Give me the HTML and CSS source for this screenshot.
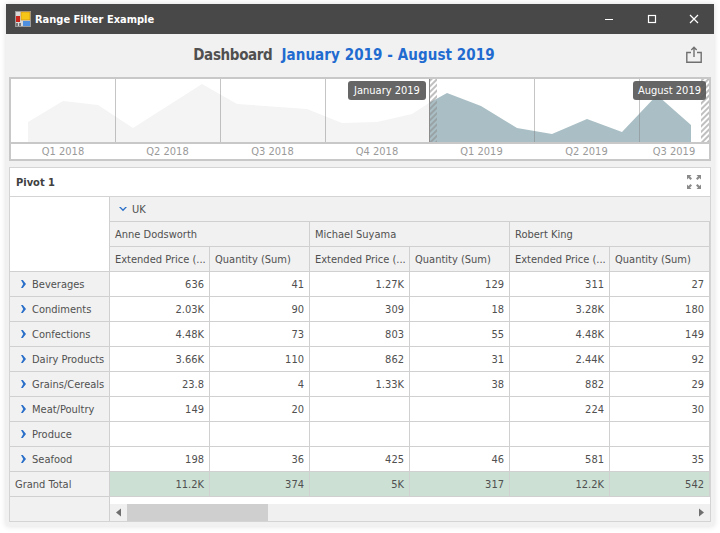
FILE: index.html
```html
<!DOCTYPE html>
<html lang="en">
<head>
<meta charset="utf-8">
<title>Range Filter Example</title>
<link rel="stylesheet" href="styles.css">
</head>
<body>
<div class="window">
  <header class="titlebar">
    <svg class="app-icon" width="16" height="16" viewBox="0 0 16 16">
      <rect x="0.5" y="0.5" width="15" height="15" fill="#d8d8d8" stroke="#9a9a9a"/>
      <rect x="6" y="1" width="9" height="8" fill="#f5c518" stroke="#c98a10" stroke-width="0.6"/>
      <rect x="1" y="5" width="4" height="6" fill="#c8261c"/>
      <rect x="8" y="10" width="7" height="5" fill="#4f8fe0"/>
      <rect x="1" y="12" width="2" height="3" fill="#777"/>
      <rect x="4" y="12" width="2" height="3" fill="#777"/>
    </svg>
    <span class="app-title">Range Filter Example</span>
    <div class="win-controls">
      <svg width="12" height="12" viewBox="0 0 12 12"><path d="M1 6.500h8" stroke="#fff" fill="none"/></svg>
      <svg width="12" height="12" viewBox="0 0 12 12"><rect x="2.500" y="2.500" width="7" height="7" stroke="#fff" stroke-width="1.200" fill="none"/></svg>
      <svg width="12" height="12" viewBox="0 0 12 12"><path d="M2 2l8 8M10 2l-8 8" stroke="#fff" stroke-width="1.200" fill="none"/></svg>
    </div>
  </header>

  <div class="dash-head">
    <div class="dash-title"><span class="dash-name">Dashboard</span><span class="dash-range">January 2019 - August 2019</span></div>
    <svg class="export" width="16" height="17" viewBox="0 0 16 17">
      <path d="M5 6.500H.8v9.700h14.400V6.500H11M8 11V1.500M5.300 4L8 1.300 10.700 4" fill="none" stroke="#707070" stroke-width="1.400"/>
    </svg>
  </div>

  <section class="range">
    <div class="plot">
      <svg class="plot-svg" width="698" height="63" viewBox="11 79 698 63">
        <defs>
          <pattern id="hatch" width="4" height="4" patternUnits="userSpaceOnUse" patternTransform="rotate(-45)">
            <rect width="4" height="2" fill="#8c8c8c"/>
          </pattern>
        </defs>
        <path d="M28 142V122L63 101 98 105 133 128 202 84 237 104 307 109 342 123 377 122 412 114 429 103V142Z" fill="#f4f4f4"/>
        <path d="M429 142V103L447 93 481 106 517 128 552 134 587 119 622 132 657 95 691 125V142Z" fill="#a9bfc5"/>
        <path d="M115.500 79V142M220.500 79V142M325.500 79V142M534.500 79V142M639.500 79V142" stroke="#7f7f7f" stroke-opacity=".45"/>
        <rect x="429" y="79" width="8" height="63" fill="url(#hatch)" opacity=".55"/>
        <rect x="701" y="79" width="8" height="63" fill="url(#hatch)" opacity=".55"/>
        <path d="M429.500 79V142" stroke="#8c8c8c"/>
      </svg>
      <span class="tip tip-left">January 2019</span>
      <span class="tip tip-right">August 2019</span>
    </div>
    <div class="axis">
      <span>Q1 2018</span><span>Q2 2018</span><span>Q3 2018</span><span>Q4 2018</span><span>Q1 2019</span><span>Q2 2019</span><span>Q3 2019</span>
    </div>
  </section>

  <section class="pivot">
    <div class="pivot-head">
      <span class="pivot-title">Pivot 1</span>
      <svg class="maximize" width="16" height="16" viewBox="0 0 16 16">
        <path d="M1 1h4.500L4 2.500l2 2L4.500 6l-2-2L1 5.500zM15 1v4.500L13.500 4l-2 2L10 4.500l2-2L10.500 1zM1 15v-4.500L2.500 12l2-2L6 11.500l-2 2L5.500 15zM15 15h-4.500l1.500-1.500-2-2 1.500-1.500 2 2 1.500-1.500z" fill="#8a8a8a"/>
      </svg>
    </div>
    <div class="grid">
      <div class="c corner"></div>
      <div class="c h span6 top"><svg class="chev" width="8" height="8" viewBox="0 0 8 8"><path d="M0 2h1.800L4 4.300 6.200 2H8L4 6.200z" fill="#2a6fc9"/></svg><span class="uk">UK</span></div>
      <div class="c h span2">Anne Dodsworth</div>
      <div class="c h span2">Michael Suyama</div>
      <div class="c h span2">Robert King</div>
      <div class="c h">Extended Price (...</div><div class="c h">Quantity (Sum)</div>
      <div class="c h">Extended Price (...</div><div class="c h">Quantity (Sum)</div>
      <div class="c h">Extended Price (...</div><div class="c h">Quantity (Sum)</div>

      <div class="c h row"><svg class="chev-r" width="8" height="8" viewBox="0 0 8 8"><path d="M2 0h1.800L7 4 3.800 8H2l2.200-4z" fill="#2a6fc9"/></svg>Beverages</div>
      <div class="c n">636</div><div class="c n">41</div><div class="c n">1.27K</div><div class="c n">129</div><div class="c n">311</div><div class="c n">27</div>
      <div class="c h row"><svg class="chev-r" width="8" height="8" viewBox="0 0 8 8"><path d="M2 0h1.800L7 4 3.800 8H2l2.200-4z" fill="#2a6fc9"/></svg>Condiments</div>
      <div class="c n">2.03K</div><div class="c n">90</div><div class="c n">309</div><div class="c n">18</div><div class="c n">3.28K</div><div class="c n">180</div>
      <div class="c h row"><svg class="chev-r" width="8" height="8" viewBox="0 0 8 8"><path d="M2 0h1.800L7 4 3.800 8H2l2.200-4z" fill="#2a6fc9"/></svg>Confections</div>
      <div class="c n">4.48K</div><div class="c n">73</div><div class="c n">803</div><div class="c n">55</div><div class="c n">4.48K</div><div class="c n">149</div>
      <div class="c h row"><svg class="chev-r" width="8" height="8" viewBox="0 0 8 8"><path d="M2 0h1.800L7 4 3.800 8H2l2.200-4z" fill="#2a6fc9"/></svg>Dairy Products</div>
      <div class="c n">3.66K</div><div class="c n">110</div><div class="c n">862</div><div class="c n">31</div><div class="c n">2.44K</div><div class="c n">92</div>
      <div class="c h row"><svg class="chev-r" width="8" height="8" viewBox="0 0 8 8"><path d="M2 0h1.800L7 4 3.800 8H2l2.200-4z" fill="#2a6fc9"/></svg>Grains/Cereals</div>
      <div class="c n">23.8</div><div class="c n">4</div><div class="c n">1.33K</div><div class="c n">38</div><div class="c n">882</div><div class="c n">29</div>
      <div class="c h row"><svg class="chev-r" width="8" height="8" viewBox="0 0 8 8"><path d="M2 0h1.800L7 4 3.800 8H2l2.200-4z" fill="#2a6fc9"/></svg>Meat/Poultry</div>
      <div class="c n">149</div><div class="c n">20</div><div class="c n"></div><div class="c n"></div><div class="c n">224</div><div class="c n">30</div>
      <div class="c h row"><svg class="chev-r" width="8" height="8" viewBox="0 0 8 8"><path d="M2 0h1.800L7 4 3.800 8H2l2.200-4z" fill="#2a6fc9"/></svg>Produce</div>
      <div class="c n"></div><div class="c n"></div><div class="c n"></div><div class="c n"></div><div class="c n"></div><div class="c n"></div>
      <div class="c h row"><svg class="chev-r" width="8" height="8" viewBox="0 0 8 8"><path d="M2 0h1.800L7 4 3.800 8H2l2.200-4z" fill="#2a6fc9"/></svg>Seafood</div>
      <div class="c n">198</div><div class="c n">36</div><div class="c n">425</div><div class="c n">46</div><div class="c n">581</div><div class="c n">35</div>

      <div class="c h">Grand Total</div>
      <div class="c n t">11.2K</div><div class="c n t">374</div><div class="c n t">5K</div><div class="c n t">317</div><div class="c n t">12.2K</div><div class="c n t">542</div>

      <div class="c h blank"></div>
      <div class="scroll-cell">
        <div class="scrollbar">
          <svg class="arrow" width="17" height="17" viewBox="0 0 17 17"><path d="M6 8.500l5-4v8z" fill="#6f6f6f"/></svg>
          <div class="track"><div class="thumb"></div></div>
          <svg class="arrow" width="17" height="17" viewBox="0 0 17 17"><path d="M11 8.500l-5-4v8z" fill="#6f6f6f"/></svg>
        </div>
      </div>
    </div>
  </section>
</div>
</body>
</html>
```

FILE: styles.css
```css
* { box-sizing: border-box; }
html, body { margin: 0; padding: 0; background: #fff; }
body { width: 720px; height: 533px; overflow: hidden; font-family: "DejaVu Sans Condensed", "DejaVu Sans", sans-serif; font-size: 11px; color: #505050; }
.window { margin: 4px 6px 0; width: 708px; height: 522px; background: #f1f1f1; box-shadow: 0 0 6px rgba(0,0,0,.14); display: flex; flex-direction: column; }
.titlebar { height: 30px; flex: none; background: #484848; color: #fff; display: flex; align-items: center; padding-left: 9px; }
.app-icon { flex: none; }
.app-title { margin-left: 4px; font-weight: bold; }
.win-controls { margin-left: auto; display: flex; gap: 30px; padding-right: 14px; }
.dash-head { height: 43px; flex: none; position: relative; display: flex; align-items: center; justify-content: center; padding-right: 30px; }
.dash-title { font-weight: bold; font-size: 15px; margin-left: -2px; margin-top: -2px; }
.dash-name { color: #505050; letter-spacing: -.35px; }
.dash-range { color: #1f6bd0; margin-left: 9px; letter-spacing: .08px; }
.export { position: absolute; right: 12px; top: 12px; }
.range { margin: 0 3px; height: 84px; flex: none; border: 2px solid #c8c8c8; background: #fff; display: flex; flex-direction: column; }
.plot { height: 63px; flex: none; position: relative; overflow: hidden; }
.plot-svg { display: block; }
.tip { position: absolute; top: 2px; height: 19px; line-height: 19px; border-radius: 3px; background: rgba(85,85,85,.9); color: #fff; text-align: center; }
.tip-left { left: 337px; width: 78px; }
.tip-right { left: 622px; width: 73px; }
.axis { flex: 1; border-top: 2px solid #c8c8c8; display: grid; grid-template-columns: 104px 105px 105px 104px 105px 105px 70px; color: #9a9a9a; text-align: center; line-height: 15px; }
.pivot { margin: 6px 3px 0; height: 355px; flex: none; background: #fff; border: 1px solid #d4d4d4; display: flex; flex-direction: column; }
.pivot-head { height: 29px; flex: none; display: flex; align-items: center; justify-content: space-between; padding: 0 8px 0 6px; border-bottom: 1px solid #d4d4d4; }
.pivot-title { font-weight: bold; color: #404040; }
.grid { display: grid; grid-template-columns: repeat(7, 100px); grid-template-rows: repeat(12, 25px) 24px; }
.c { border-right: 1px solid #d0d0d0; border-bottom: 1px solid #d0d0d0; display: flex; align-items: center; white-space: nowrap; overflow: hidden; }
.corner { grid-row: span 3; background: #fff; }
.h { background: #f1f1f1; padding-left: 5px; }
.span6 { grid-column: span 6; padding-left: 9px; }
.span2 { grid-column: span 2; }
.top { border-right: 0; }
.chev { flex: none; }
.uk { margin-left: 5px; }
.row { padding-left: 9px; }
.chev-r { flex: none; margin-right: 5px; }
.n { justify-content: flex-end; padding-right: 5px; background: #fff; }
.t { background: #cce0d4; }
.blank { border-bottom: 0; }
.scroll-cell { grid-column: span 6; display: flex; align-items: flex-end; }
.scrollbar { width: 100%; height: 17px; background: #f0f0f0; display: flex; }
.arrow { flex: none; }
.track { flex: 1; }
.thumb { width: 141px; height: 17px; background: #cfcfcf; }
```
